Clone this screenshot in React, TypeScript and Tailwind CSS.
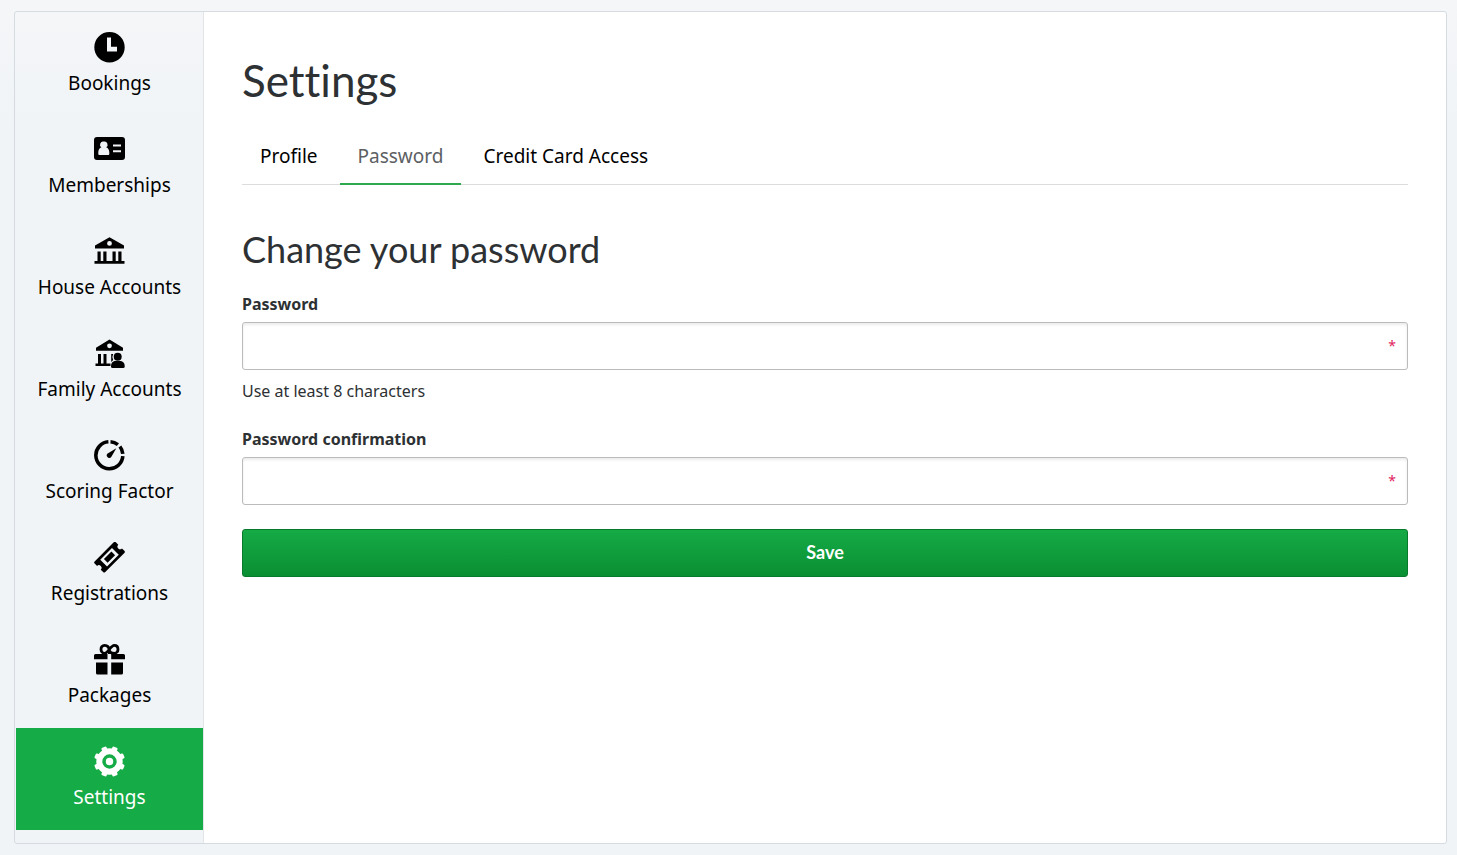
import { useState } from 'react';
import type { FormEvent, ReactNode } from 'react';

const gearTeeth = [22.5, 67.5, 112.5, 157.5];

const icons: Record<string, ReactNode> = {
  clock: (
    <path fillRule="evenodd" d="M15.5 0a15.2 15.2 0 1 0 0 30.4a15.2 15.2 0 1 0 0-30.4zM13 5.5h4v9.3h6v4.6H13z" />
  ),
  card: (
    <path
      fillRule="evenodd"
      d="M3 3h25a3 3 0 0 1 3 3v17a3 3 0 0 1-3 3H3a3 3 0 0 1-3-3V6a3 3 0 0 1 3-3zM9.8 7.6a3.1 3.1 0 0 0-2.4 5.6C5.4 14 4.3 16 4.3 18.5v1.5q0 1 1 1h9q1 0 1-1v-1.5c0-2.5-1.1-4.5-3.1-5.3a3.1 3.1 0 0 0-2.4-5.6zM19 10.6h8v2h-8zM19 16.2h8v2h-8z"
    />
  ),
  bank: (
    <>
      <path fillRule="evenodd" d="M15.5 1.2L30 9.5V12.5H1V9.5zM15.5 5a2.4 2.4 0 1 0 0 4.8a2.4 2.4 0 1 0 0-4.8z" />
      <path d="M3.5 15.5h3.2V25h2.6v-9.5h3.2V25h6v-9.5h3.2V25h2.6v-9.5h3.2V25h3v2.8H.5V25h3z" />
    </>
  ),
  bankUser: (
    <>
      <path fillRule="evenodd" d="M15.5 1.6L29 9.8V12.8H2V9.8zM15.5 5.4a2.4 2.4 0 1 0 0 4.8a2.4 2.4 0 1 0 0-4.8z" />
      <path d="M4 16h3v9.5h2.5V16h3v9.5h4V28H1.5v-2.5H4zM17.2 16h2a6 6 0 0 0 0 6l-2 2z" />
      <circle cx="23.7" cy="18.8" r="4" />
      <path d="M20.5 23h6.5q3.7 1 3.7 5v.5q0 1.5-1.5 1.5H18.5Q17 30 17 28.5V28q0-4 3.5-5z" />
    </>
  ),
  gauge: (
    <>
      <path
        fill="none"
        stroke="currentColor"
        strokeWidth="3.6"
        d="M16.5 1.8A13.5 13.5 0 0 1 23.9 4.6M25.9 6.5A13.5 13.5 0 0 1 28.8 13.8M28.8 16.2A13.5 13.5 0 1 1 14.4 1.8"
      />
      <path d="M22.3 8.3L17.4 16.8A2.5 2.5 0 1 1 13.7 13.5z" />
    </>
  ),
  ticket: (
    <g transform="rotate(-45 15.5 15.2)">
      <path
        fillRule="evenodd"
        d="M2 7.7h27q1.5 0 1.5 1.5v3.4a2.6 2.6 0 0 0 0 5.2v3.4q0 1.5-1.5 1.5H2Q.5 22.7.5 21.2v-3.4a2.6 2.6 0 0 0 0-5.2V9.2Q.5 7.7 2 7.7zM7.2 10.4v9.6h16.6v-9.6z"
      />
      <path d="M10.2 12.6h10.6v5.2H10.2z" />
    </g>
  ),
  gift: (
    <>
      <path d="M1.5 10h12v5.3H0v-3.8Q0 10 1.5 10zM17.2 10h12.3Q31 10 31 11.5v3.8H17.2zM2 18.5h11.5v12H3.5Q2 30.5 2 29zM17.2 18.5H29V29q0 1.5-1.5 1.5H17.2z" />
      <path
        fill="none"
        stroke="currentColor"
        strokeWidth="2.8"
        d="M15.4 10V6.5C15 3 13 1.4 10.7 1.4C8 1.4 7 3.5 7 5.4C7 7.5 8.5 9.3 10.7 9.3C13.5 9.3 17 1.4 20.2 1.4C23 1.4 24 3.5 24 5.4C24 7.5 22.5 9.3 20.2 9.3C17.5 9.3 15.8 8.5 15.4 6.5"
      />
    </>
  ),
  gear: (
    <>
      <circle cx="15.5" cy="15.5" r="10.2" fill="none" stroke="currentColor" strokeWidth="6" />
      {gearTeeth.map((angle) => (
        <g key={angle} transform={`rotate(${angle} 15.5 15.5)`}>
          <path d="M12.8 5V1.3q0-1.3 1.3-1.3h2.8q1.3 0 1.3 1.3V5zM12.8 26v3.7q0 1.3 1.3 1.3h2.8q1.3 0 1.3-1.3V26z" />
        </g>
      ))}
      <circle cx="15.5" cy="15.5" r="3.7" />
    </>
  ),
};

const menuItems = [
  { label: 'Bookings', icon: 'clock' },
  { label: 'Memberships', icon: 'card' },
  { label: 'House Accounts', icon: 'bank' },
  { label: 'Family Accounts', icon: 'bankUser' },
  { label: 'Scoring Factor', icon: 'gauge' },
  { label: 'Registrations', icon: 'ticket' },
  { label: 'Packages', icon: 'gift' },
  { label: 'Settings', icon: 'gear' },
];

const tabs = ['Profile', 'Password', 'Credit Card Access'];

interface PasswordFieldProps {
  id: string;
  label: string;
  hint?: string;
  value: string;
  onChange: (value: string) => void;
}

function PasswordField({ id, label, hint, value, onChange }: PasswordFieldProps) {
  return (
    <div className="mb-6">
      <label htmlFor={id} className="block mb-1.5 text-base leading-6 font-bold">
        {label}
      </label>
      <div className="relative">
        <input
          id={id}
          type="password"
          required
          value={value}
          onChange={(e) => onChange(e.target.value)}
          className="block w-full h-12 px-3 pr-8 bg-white border border-[#bbb] rounded-[3px] shadow-[inset_0_2px_3px_rgba(0,0,0,0.08)]"
        />
        <span className="absolute right-3 top-3 text-sm leading-6 text-[#e0245e]">*</span>
      </div>
      {hint && <p className="mt-[9px] text-base leading-6">{hint}</p>}
    </div>
  );
}

export default function App() {
  const [activeItem, setActiveItem] = useState('Settings');
  const [activeTab, setActiveTab] = useState('Password');
  const [password, setPassword] = useState('');
  const [confirmation, setConfirmation] = useState('');

  function handleSubmit(e: FormEvent) {
    e.preventDefault();
    setPassword('');
    setConfirmation('');
  }

  return (
    <div className="flex min-h-screen pt-[11px] pr-2.5 pb-[11px] pl-3.5 bg-[linear-gradient(#f5f6f8,#f0f4f7_130px)] font-['Noto_Sans',sans-serif] text-[#2d3133]">
      <div className="flex flex-1 border border-[#d5dbe0] rounded-[3px]">
        <nav className="w-[189px] shrink-0 pt-0.5 pl-px border-r border-[#e2e5e8]">
          {menuItems.map((item) => (
            <a
              key={item.label}
              href="#"
              onClick={() => setActiveItem(item.label)}
              className={`flex flex-col items-center h-[102px] pt-[18px] ${activeItem === item.label ? 'bg-[#15ab46] text-white' : 'text-black'}`}
            >
              <svg viewBox="0 0 31 31" fill="currentColor" className="size-[31px]" aria-hidden="true">
                {icons[item.icon]}
              </svg>
              <span className="mt-1.5 text-[19px] leading-7">{item.label}</span>
            </a>
          ))}
        </nav>

        <main className="flex-1 px-[38px] pt-10 bg-white rounded-r-[3px]">
          <h1 className="font-['Lato',sans-serif] text-[44px] leading-[56px] [font-variant-ligatures:none]">Settings</h1>

          <div className="flex gap-1 mt-6 border-b border-[#dcdcdc]">
            {tabs.map((tab) => (
              <a
                key={tab}
                href="#"
                onClick={() => setActiveTab(tab)}
                className={`-mb-px px-[18px] pt-2.5 pb-[13px] text-[19px] leading-7 border-b-2 ${activeTab === tab ? 'border-[#2fa84f] text-[#5c6063]' : 'border-transparent text-black'}`}
              >
                {tab}
              </a>
            ))}
          </div>

          <form onSubmit={handleSubmit}>
            <h2 className="mt-10 mb-[19px] font-['Lato',sans-serif] text-[36px] leading-12">Change your password</h2>
            <PasswordField
              id="password"
              label="Password"
              hint="Use at least 8 characters"
              value={password}
              onChange={setPassword}
            />
            <PasswordField
              id="password-confirmation"
              label="Password confirmation"
              value={confirmation}
              onChange={setConfirmation}
            />
            <button
              type="submit"
              className="block w-full h-12 pb-0.5 border border-[#087a2c] rounded-[3px] bg-linear-to-b from-[#15ab46] to-[#0a8f33] font-['Lato',sans-serif] text-lg font-bold text-white"
            >
              Save
            </button>
          </form>
        </main>
      </div>
    </div>
  );
}
